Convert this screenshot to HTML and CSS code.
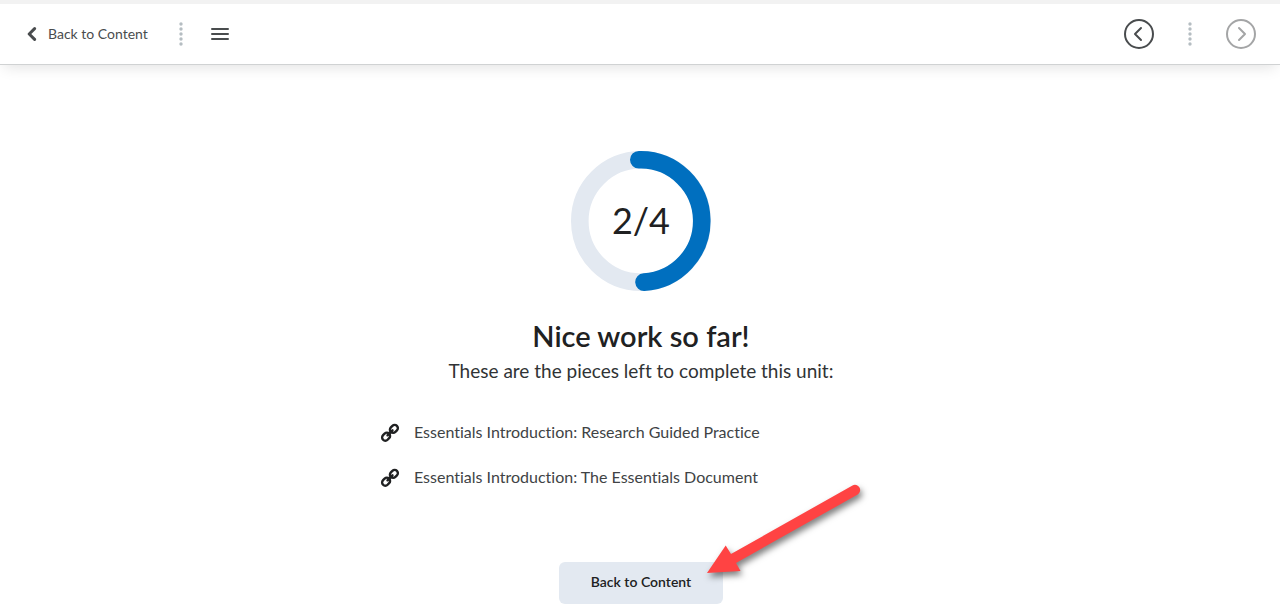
FILE: index.html
```html
<!DOCTYPE html>
<html lang="en">
<head>
<meta charset="utf-8">
<meta name="viewport" content="width=device-width, initial-scale=1">
<title>Unit progress</title>
<link rel="stylesheet" href="styles.css">
</head>
<body>
<header class="topbar">
  <nav class="group" aria-label="Unit">
    <a class="back-link" href="#content">
      <svg class="chevron" viewBox="0 0 10 14" aria-hidden="true"><path d="M7.6 1.6 2.2 7l5.4 5.4"/></svg>
      <span>Back to Content</span>
    </a>
    <svg class="dots" viewBox="0 0 4 24" aria-hidden="true"><path d="M2 2v20.1"/></svg>
    <button class="icon-button menu" type="button" aria-label="Open menu">
      <svg viewBox="0 0 18 14" aria-hidden="true"><path d="M1 2h16M1 7h16M1 12h16"/></svg>
    </button>
  </nav>
  <nav class="group pager" aria-label="Pages">
    <button class="icon-button round" type="button" aria-label="Previous">
      <svg viewBox="0 0 30 30" aria-hidden="true"><circle cx="15" cy="15" r="14"/><path d="M17 9l-6 6 6 6"/></svg>
    </button>
    <svg class="dots" viewBox="0 0 4 24" aria-hidden="true"><path d="M2 2v20.1"/></svg>
    <button class="icon-button round" type="button" aria-label="Next" disabled>
      <svg viewBox="0 0 30 30" aria-hidden="true"><circle cx="15" cy="15" r="14"/><path d="M13 9l6 6-6 6"/></svg>
    </button>
  </nav>
</header>
<main class="summary">
  <div class="progress">
    <svg class="ring" viewBox="0 0 140 140" aria-hidden="true">
      <circle class="ring-track" cx="70" cy="70" r="61.2"/>
      <path class="ring-value" d="M67.8 8.800H70A61.2 61.2 0 0 1 73 131.100"/>
    </svg>
    <span class="count">2/4</span>
  </div>
  <h1 class="title">Nice work so far!</h1>
  <p class="lead">These are the pieces left to complete this unit:</p>
  <ul class="pieces">
    <li class="piece">
      <svg class="link-icon" viewBox="0 0 20 20" aria-hidden="true"><rect x="-4.300" y="-3.200" width="8.600" height="6.400" rx="3.200" transform="translate(13.900 6.900) rotate(-45)"/><rect x="-4.300" y="-3.200" width="8.600" height="6.400" rx="3.200" transform="translate(6.100 14.700) rotate(-45)"/><path d="m7.500 13.300 5-5"/></svg>
      <span>Essentials Introduction: Research Guided Practice</span>
    </li>
    <li class="piece">
      <svg class="link-icon" viewBox="0 0 20 20" aria-hidden="true"><rect x="-4.300" y="-3.200" width="8.600" height="6.400" rx="3.200" transform="translate(13.900 6.900) rotate(-45)"/><rect x="-4.300" y="-3.200" width="8.600" height="6.400" rx="3.200" transform="translate(6.100 14.700) rotate(-45)"/><path d="m7.500 13.300 5-5"/></svg>
      <span>Essentials Introduction: The Essentials Document</span>
    </li>
  </ul>
  <div class="action">
    <button class="back-button" type="button">Back to Content</button>
    <svg class="pointer" viewBox="0 0 170 110" aria-hidden="true"><path d="M8 93 26.700 65.500l5.300 8.500L153.500 5.500a5.200 5.200 0 0 1 5.200 9L37 83 41.500 91Z"/></svg>
  </div>
</main>
</body>
</html>
```
FILE: styles.css
```css
* {
  box-sizing: border-box;
}

body {
  margin: 0;
  background: #fff;
  color: #202122;
  font-family: Lato, "Liberation Sans", sans-serif;
  font-variant-ligatures: none;
}

svg {
  display: block;
  fill: none;
}

.topbar {
  display: flex;
  justify-content: space-between;
  align-items: center;
  height: 65px;
  padding: 0 24px 0 27px;
  border-top: 4px solid #f2f2f2;
  border-bottom: 1px solid #d0d2d3;
  box-shadow: 0 6px 14px -4px rgba(0, 0, 0, 0.12);
}

.group {
  display: flex;
  align-items: center;
  gap: 28px;
}

.pager {
  gap: 34px;
}

.back-link {
  display: flex;
  align-items: center;
  gap: 11px;
  padding-right: 3px;
  color: #494c4e;
  font-size: 14px;
  line-height: 18px;
  text-decoration: none;
}

.chevron {
  width: 10px;
  height: 14px;
  stroke: #494c4e;
  stroke-width: 3;
  stroke-linecap: round;
  stroke-linejoin: round;
}

.dots {
  width: 4px;
  height: 24px;
  stroke: #b5bdc2;
  stroke-width: 3.4;
  stroke-linecap: round;
  stroke-dasharray: 0 5;
}

.icon-button {
  padding: 0;
  border: 0;
  background: none;
  color: #494c4e;
}

.icon-button svg {
  stroke: currentColor;
  stroke-width: 2;
  stroke-linecap: round;
  stroke-linejoin: round;
}

.menu svg {
  width: 18px;
  height: 14px;
}

.round svg {
  width: 30px;
  height: 30px;
}

.round:disabled {
  color: #a4a5a6;
}

.summary {
  display: flex;
  flex-direction: column;
  align-items: center;
  padding: 86px 24px 10px 26px;
}

.progress {
  display: grid;
  place-items: center;
}

.ring,
.count {
  grid-area: 1 / 1;
}

.ring {
  width: 140px;
  height: 140px;
  stroke-width: 17.6;
}

.ring-track {
  stroke: #e3e9f1;
}

.ring-value {
  stroke: #006fbf;
  stroke-linecap: round;
}

.count {
  padding-bottom: 2px;
  font-size: 36px;
  line-height: 40px;
}

.title {
  margin: 27px 0 0;
  font-size: 29px;
  font-weight: 600;
  line-height: 36px;
}

.lead {
  margin: 5px 0 0;
  color: #303335;
  font-size: 19px;
  line-height: 24px;
}

.pieces {
  width: 100%;
  max-width: 522px;
  margin: 37px 0 0;
  padding: 0;
  list-style: none;
}

.piece {
  display: flex;
  align-items: center;
  gap: 14px;
  margin-bottom: 21px;
  color: #404345;
  font-size: 16px;
  line-height: 24px;
}

.link-icon {
  width: 20px;
  height: 20px;
  overflow: visible;
  stroke: #202122;
  stroke-width: 2.4;
  stroke-linecap: round;
}

.action {
  position: relative;
  margin-top: 52px;
}

.back-button {
  display: block;
  padding: 10px 32px 12px;
  border: 0;
  border-radius: 6px;
  background: #e3e9f1;
  color: #202122;
  font-family: inherit;
  font-size: 14px;
  font-weight: 600;
  line-height: 20px;
}

.pointer {
  position: absolute;
  left: 140px;
  bottom: 14px;
  width: 170px;
  height: 110px;
  overflow: visible;
  fill: #ff4343;
  filter: drop-shadow(2px 4px 3px rgba(0, 0, 0, 0.5));
  pointer-events: none;
}
```
